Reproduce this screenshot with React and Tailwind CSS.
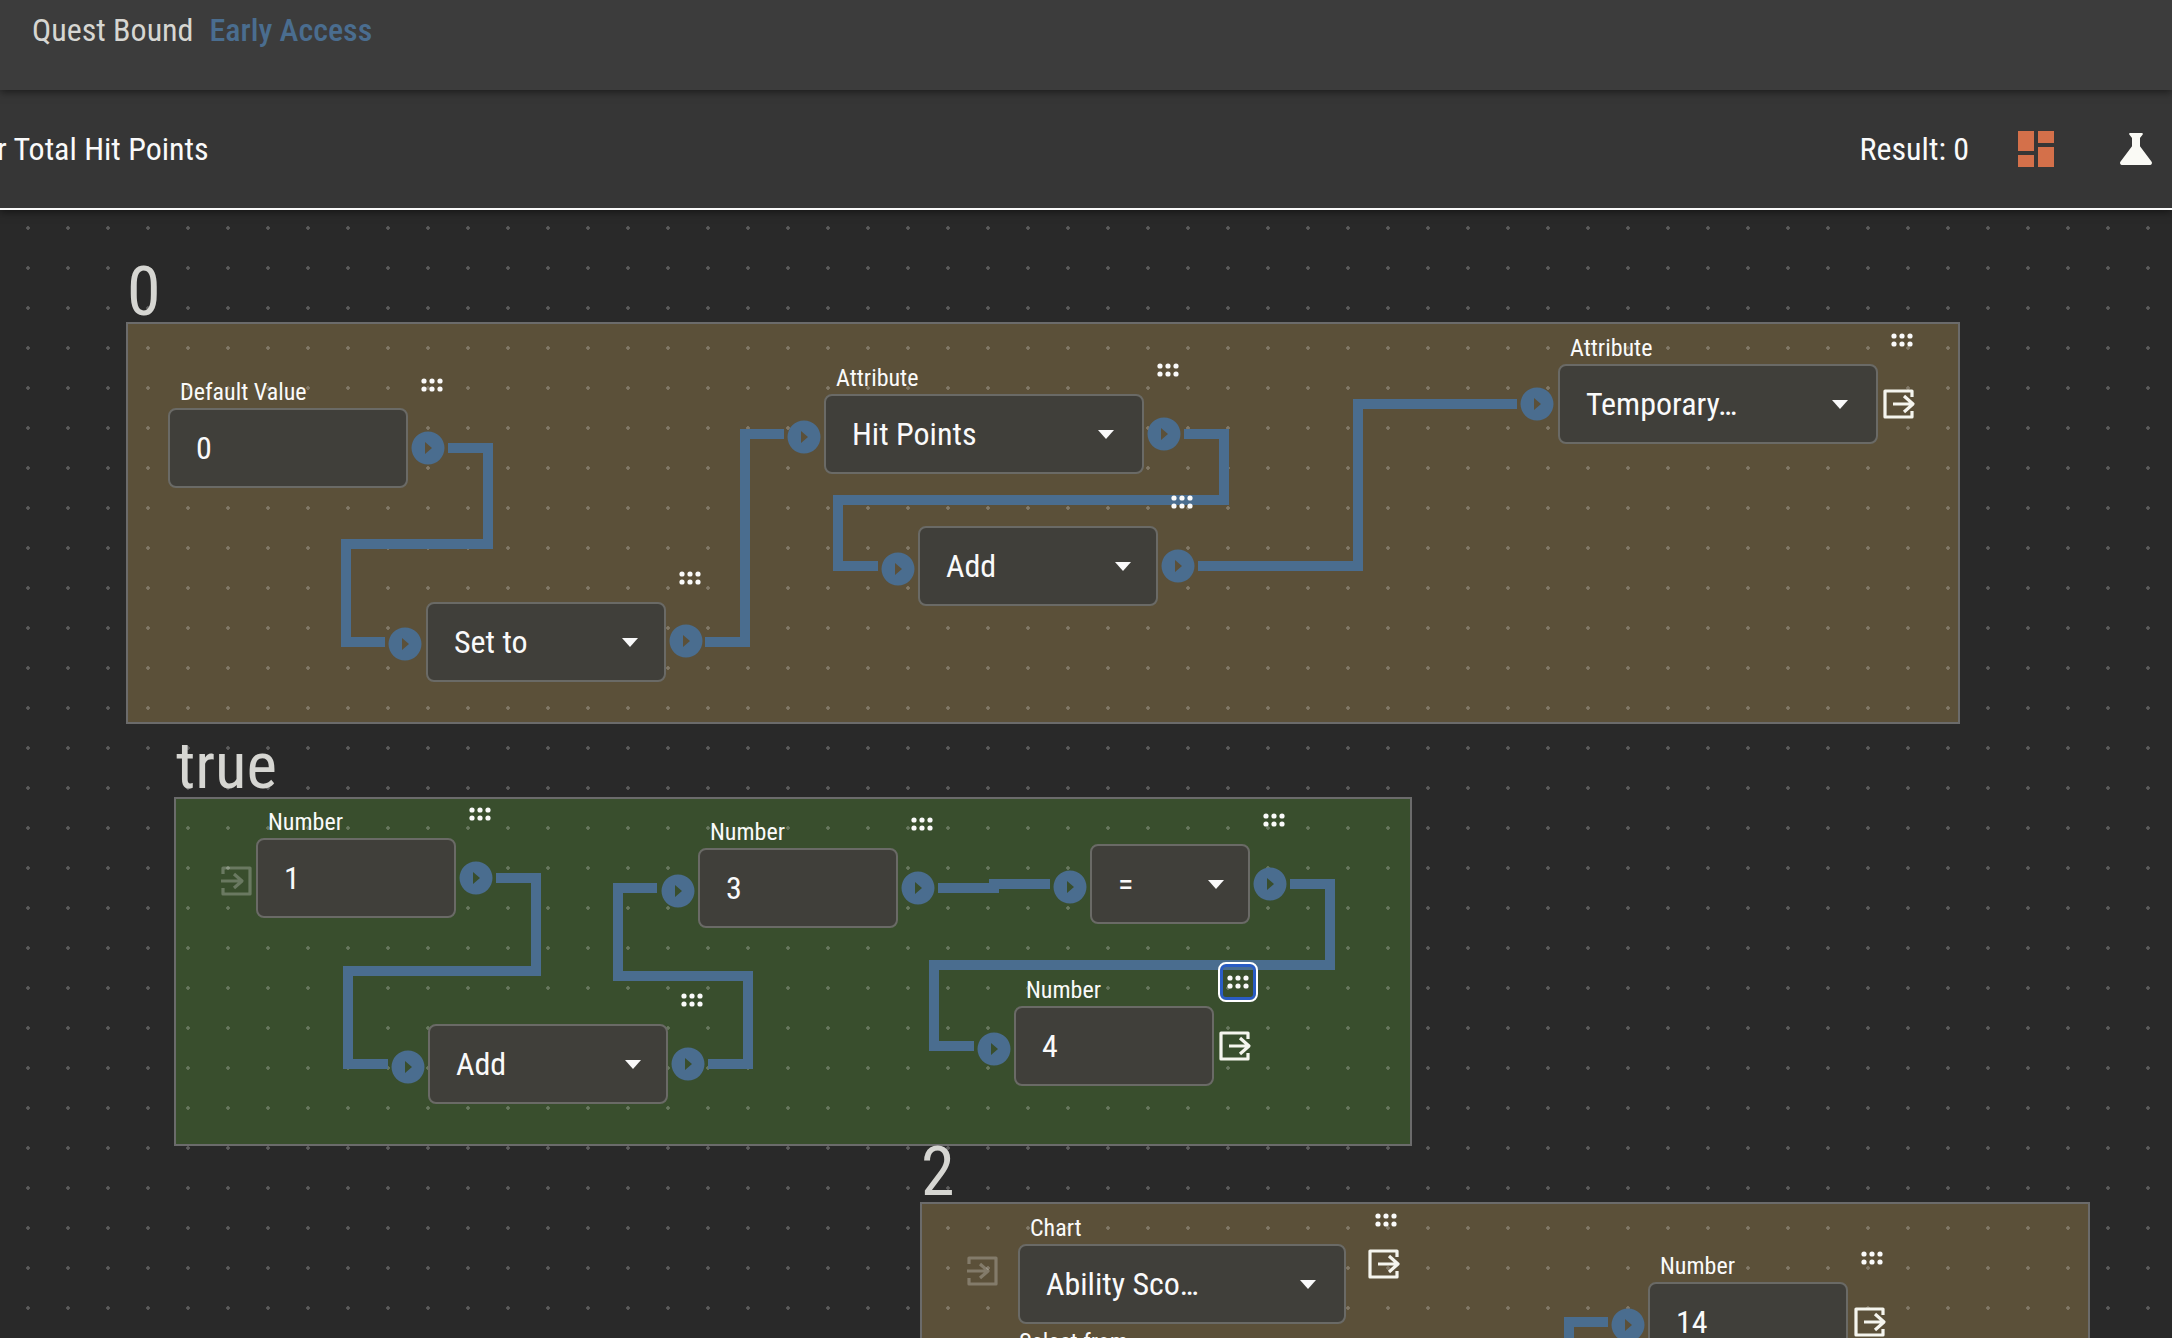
import React from 'react';

const WIRE = '#4a6d8f';

// wires in page coordinates, the svg below is offset by the header height
const wires = [
  '448,448 488,448 488,544 346,544 346,642 385,642',
  '705,642 745,642 745,434 784,434',
  '1184,434 1224,434 1224,500 838,500 838,566 878,566',
  '1198,566 1358,566 1358,404 1517,404',
  '496,878 536,878 536,971 348,971 348,1064 388,1064',
  '708,1064 748,1064 748,976 618,976 618,888 657,888',
  '938,888 999,888',
  '989,884 1050,884',
  '1290,884 1330,884 1330,965 934,965 934,1046 974,1046',
  '1569,1338 1569,1322 1608,1322',
];

const ports = [
  [428, 448], [405, 644], [686, 641], [804, 437], [1164, 434], [898, 569], [1178, 566], [1537, 404],
  [476, 878], [408, 1067], [688, 1064], [678, 891], [918, 888], [1070, 887], [1270, 884], [994, 1049], [1628, 1325],
];

const handles = [
  [421, 378], [679, 571], [1157, 363], [1171, 495], [1891, 333],
  [469, 807], [681, 993], [911, 817], [1263, 813], [1227, 975],
  [1375, 1213], [1861, 1251],
];

const exits = [[1883, 389], [1219, 1031], [1368, 1249], [1854, 1307]];
const enters = [[221, 866], [967, 1256]];

// triangle is a hole, the panel colour shows through it
function Port({ x, y }) {
  const circle = `M${x - 16.5} ${y}a16.5 16.5 0 1 0 33 0a16.5 16.5 0 1 0 -33 0Z`;
  const triangle = `M${x - 3} ${y - 6}L${x + 4} ${y}L${x - 3} ${y + 6}Z`;
  return <path d={`${circle}${triangle}`} fill={WIRE} fillRule="evenodd" />;
}

function Handle({ x, y }) {
  const dots = [];
  for (const cy of [3, 11]) for (const cx of [3, 11, 19]) dots.push(<circle key={`${cx}-${cy}`} cx={x + cx} cy={y + cy} r="2.6" fill="#fafafa" />);
  return <g>{dots}</g>;
}

function ExitIcon({ x, y }) {
  return (
    <g transform={`translate(${x} ${y})`} fill="none" stroke="#f5f5ee" strokeWidth="3.2" strokeLinejoin="round">
      <path d="M29 8V2H2V28H29V22" />
      <path d="M10 15H30M21 7L30 15L21 23" />
    </g>
  );
}

function EnterIcon({ x, y }) {
  return (
    <g transform={`translate(${x} ${y})`} fill="none" stroke="#fafafa" strokeWidth="3.2" strokeLinejoin="round" opacity="0.25">
      <path d="M2 8V2H29V28H2V22" />
      <path d="M0 15H21M13 8L21 15L13 22" />
    </g>
  );
}

function Node({ pos, label, value, select, caret = 'mr-[26px]' }) {
  return (
    <div className={`absolute h-[80px] flex items-center justify-between rounded-lg border-2 border-[#6a6a66] bg-[#403f3a] pl-[26px] ${pos}`}>
      {label && <span className="absolute left-[10px] -top-[30px] h-6 leading-6 text-[24px] text-[#fafafa] whitespace-nowrap">{label}</span>}
      <span className="-mt-[1px] text-[32px] text-[#fafafa] whitespace-nowrap">{value}</span>
      {select && <span className={`h-0 w-0 border-x-[8px] border-t-[9px] border-x-transparent border-t-[#fafafa] ${caret}`} />}
    </div>
  );
}

export default function App() {
  return (
    <div className="relative flex h-[1338px] w-[2172px] flex-col overflow-hidden bg-[#292929] [font-family:Roboto,sans-serif] font-stretch-[87%]">
      <header className="relative z-20 flex h-[90px] shrink-0 items-start gap-4 bg-[#3c3c3c] pl-8 pt-[10px] shadow-[0_2px_8px_rgba(0,0,0,0.5)]">
        <span className="text-[32px] leading-[40px] text-[#d6d6d2]">Quest Bound</span>
        <span className="text-[32px] leading-[40px] font-medium text-[#4a6d8f]">Early Access</span>
      </header>

      <div className="relative z-10 flex h-[120px] shrink-0 items-center justify-between border-b-2 border-[#fafafa] bg-[#363636] shadow-[0_2px_8px_rgba(0,0,0,0.5)]">
        <span className="-ml-[3px] text-[32px] text-[#fafafa] whitespace-nowrap">r Total Hit Points</span>
        <div className="flex items-center pr-3">
          <span className="mr-[43px] text-[32px] text-[#fafafa]">Result: 0</span>
          <svg viewBox="0 0 24 24" className="mr-[52px] h-12 w-12" fill="#d4704a">
            <path d="M3 13h8V3H3zm0 8h8v-6H3zm10 0h8V11h-8zm0-18v6h8V3z" />
          </svg>
          <svg viewBox="0 0 24 24" className="h-12 w-12" fill="#fafaf5">
            <path d="M19.8 18.4 14 10.67V6.5l1.35-1.69c.26-.33.03-.81-.39-.81H9.04c-.42 0-.65.48-.39.81L10 6.5v4.17L4.2 18.4c-.49.66-.02 1.6.8 1.6h14c.82 0 1.29-.94.8-1.6" />
          </svg>
        </div>
      </div>

      <main className="relative flex-1">
        <div className="absolute left-[126px] top-[112px] h-[402px] w-[1834px] border-2 border-[#6b6b6b] bg-[#5b5039]" />
        <div className="absolute left-[174px] top-[587px] h-[349px] w-[1238px] border-2 border-[#6b6b6b] bg-[#394e2d]" />
        <div className="absolute left-[920px] top-[992px] h-[200px] w-[1170px] border-2 border-[#6b6b6b] bg-[#5b5039]" />

        <div className="absolute inset-0 bg-[radial-gradient(circle,rgba(255,255,255,0.23)_1.5px,transparent_2.1px)] bg-[size:40px_40px] bg-[position:8px_-2px]" />

        <span className="absolute left-[127px] top-[48px] text-[68px] leading-[68px] text-[#d6d6d2]">0</span>
        <span className="absolute left-[176px] top-[522px] text-[65px] leading-[68px] text-[#d6d6d2]">true</span>
        <span className="absolute left-[921px] top-[928px] text-[68px] leading-[68px] text-[#d6d6d2]">2</span>

        <svg viewBox="0 210 2172 1128" className="absolute inset-0 h-full w-full">
          {wires.map((points) => (
            <polyline key={points} points={points} fill="none" stroke={WIRE} strokeWidth="10" />
          ))}
          {ports.map(([x, y]) => <Port key={`${x}-${y}`} x={x} y={y} />)}
          {handles.map(([x, y]) => <Handle key={`${x}-${y}`} x={x} y={y} />)}
          {exits.map(([x, y]) => <ExitIcon key={`${x}-${y}`} x={x} y={y} />)}
          {enters.map(([x, y]) => <EnterIcon key={`${x}-${y}`} x={x} y={y} />)}
        </svg>

        <Node pos="left-[168px] top-[198px] w-[240px]" label="Default Value" value="0" />
        <Node pos="left-[426px] top-[392px] w-[240px]" value="Set to" select />
        <Node pos="left-[824px] top-[184px] w-[320px]" label="Attribute" value="Hit Points" select caret="mr-[28px]" />
        <Node pos="left-[918px] top-[316px] w-[240px]" value="Add" select caret="mr-[25px]" />
        <Node pos="left-[1558px] top-[154px] w-[320px]" label="Attribute" value="Temporary…" select caret="mr-[28px]" />

        <Node pos="left-[256px] top-[628px] w-[200px]" label="Number" value="1" />
        <Node pos="left-[428px] top-[814px] w-[240px]" value="Add" select caret="mr-[25px]" />
        <Node pos="left-[698px] top-[638px] w-[200px]" label="Number" value="3" />
        <Node pos="left-[1090px] top-[634px] w-[160px]" value="=" select caret="mr-[24px]" />
        <Node pos="left-[1014px] top-[796px] w-[200px]" label="Number" value="4" />

        <div className="absolute left-[1218px] top-[752px] h-[40px] w-[40px] rounded-lg border-2 border-white shadow-[inset_0_0_0_3px_#2a5cc4]" />

        <Node pos="left-[1018px] top-[1034px] w-[328px]" label="Chart" value="Ability Sco…" select caret="mr-[28px]" />
        <Node pos="left-[1648px] top-[1072px] w-[200px]" label="Number" value="14" />
        <span className="absolute left-[1019px] top-[1120px] h-6 text-[24px] leading-6 text-[#fafafa] whitespace-nowrap">Select from</span>
      </main>
    </div>
  );
}
